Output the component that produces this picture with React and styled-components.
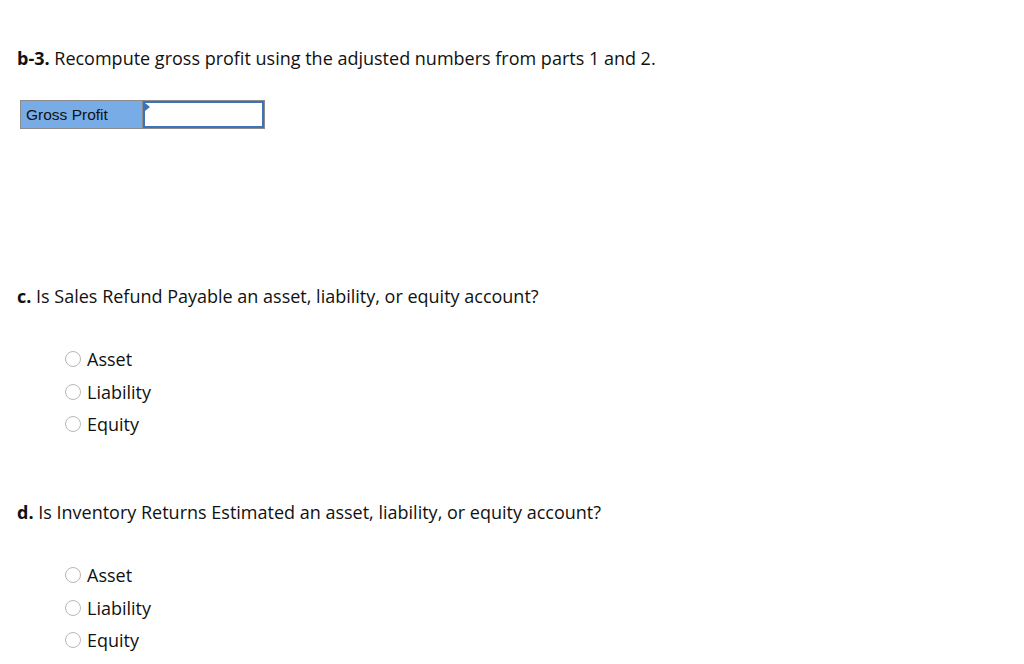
import styled, { createGlobalStyle } from 'styled-components';

const GlobalStyle = createGlobalStyle`
  body {
    margin: 0;
    background: #fff;
    font-family: 'Open Sans', Lato, sans-serif;
    color: #111;
  }
`;

const Page = styled.div`
  width: 1024px;
  height: 664px;
  padding: 46px 0 0 17px;
  box-sizing: border-box;
  overflow: hidden;
`;

const Question = styled.p`
  margin: 0;
  font-size: 18px;
  line-height: 24px;
  b {
    font-weight: 700;
  }
`;

const AnswerTable = styled.div`
  display: flex;
  width: 245px;
  height: 29px;
  margin: 30px 0 0 3px;
  border: 1px solid #8c8c8c;
  box-sizing: border-box;
`;

const LabelCell = styled.div`
  width: 122px;
  background: #78ace6;
  border-right: 1px solid #8c8c8c;
  font-family: 'Liberation Sans', Arial, sans-serif;
  font-size: 15.5px;
  line-height: 27px;
  padding-left: 5px;
  box-sizing: border-box;
  color: #111;
`;

const InputCell = styled.div`
  position: relative;
  flex: 1;
  border: 2px solid #3b72b8;
  background: #fff;
  &:before {
    content: '';
    position: absolute;
    top: 0;
    left: 0;
    border-top: 4px solid transparent;
    border-bottom: 4px solid transparent;
    border-left: 5px solid #3b72b8;
  }
`;

const Section = styled.div`
  margin-top: ${(p) => p.$top}px;
`;

const Options = styled.div`
  display: flex;
  flex-direction: column;
  gap: 8.5px;
  margin: 39px 0 0 48px;
`;

const Option = styled.label`
  display: flex;
  align-items: center;
  gap: 6px;
  font-size: 18px;
  line-height: 24px;
`;

const Radio = styled.span`
  width: 16px;
  height: 16px;
  border: 1px solid #b8b8b8;
  border-radius: 50%;
  background: #fff;
  box-sizing: border-box;
`;

function Choices() {
  return (
    <Options>
      {['Asset', 'Liability', 'Equity'].map((o) => (
        <Option key={o}>
          <Radio />
          {o}
        </Option>
      ))}
    </Options>
  );
}

export default function App() {
  return (
    <>
      <GlobalStyle />
      <Page>
        <Question>
          <b>b-3.</b> Recompute gross profit using the adjusted numbers from parts 1 and 2.
        </Question>
        <AnswerTable>
          <LabelCell>Gross Profit</LabelCell>
          <InputCell />
        </AnswerTable>
        <Section $top={155}>
          <Question>
            <b>c.</b> Is Sales Refund Payable an asset, liability, or equity account?
          </Question>
          <Choices />
        </Section>
        <Section $top={64}>
          <Question>
            <b>d.</b> Is Inventory Returns Estimated an asset, liability, or equity account?
          </Question>
          <Choices />
        </Section>
      </Page>
    </>
  );
}
